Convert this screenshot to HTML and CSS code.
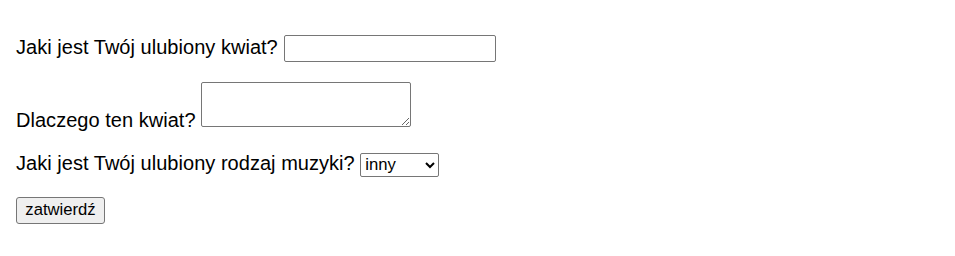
FILE: index.html
```html
<!DOCTYPE html>
<html lang="pl">
<head>
<meta charset="utf-8">
<title>Formularz</title>
<link rel="stylesheet" href="styles.css">
</head>
<body>
<form class="form">
  <p class="row"><label class="label" for="kwiat">Jaki jest Twój ulubiony kwiat?</label> <input class="field" type="text" id="kwiat"></p>
  <p class="row"><label class="label" for="dlaczego">Dlaczego ten kwiat?</label> <textarea class="area" id="dlaczego"></textarea></p>
  <p class="row"><label class="label" for="muzyka">Jaki jest Twój ulubiony rodzaj muzyki?</label> <select class="choice" id="muzyka"><option>rock</option><option>pop</option><option selected>inny</option></select></p>
  <p class="row"><button class="submit" type="submit">zatwierdź</button></p>
</form>
</body>
</html>
```
FILE: styles.css
```css
html, body {
  margin: 0;
  padding: 0;
  background: #fff;
}
body {
  font-family: "Liberation Sans", Arial, sans-serif;
  font-size: 20px;
  color: #000;
}
.form {
  padding: 15px 16px 10px;
}
.row {
  margin: 20px 0;
}
.label {
  letter-spacing: 0.03px;
}
.field, .area, .choice, .submit {
  font-family: "Liberation Sans", Arial, sans-serif;
  font-size: 16.67px;
  color: #000;
  box-sizing: border-box;
  border: 1px solid #767676;
  border-radius: 2px;
  margin: 0;
}
.field {
  width: 212px;
  height: 27px;
  padding: 1px 3px;
  margin-left: 1px;
  background: #fff;
}
.area {
  width: 210px;
  height: 45px;
  padding: 2px;
  background: #fff;
  vertical-align: baseline;
}
.choice {
  width: 79px;
  height: 24px;
  background: #fff;
}
.submit {
  width: 89px;
  height: 27px;
  padding: 1px 7px;
  background: #efefef;
  border-radius: 3px;
}
```
